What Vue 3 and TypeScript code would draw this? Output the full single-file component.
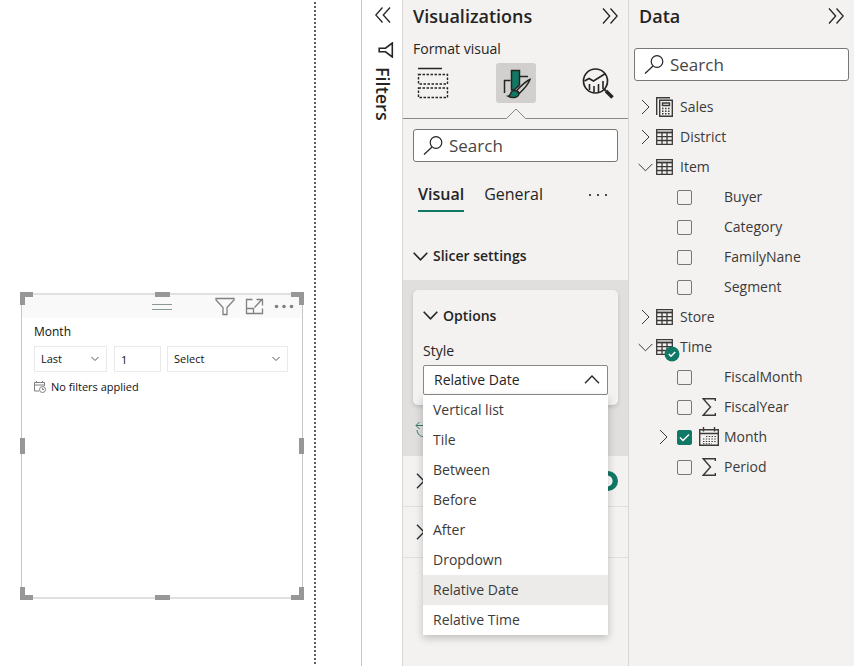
<script setup lang="ts">
import { ref } from 'vue'

interface Field {
  name: string
  sum?: boolean
  date?: boolean
  checked?: boolean
}
interface DataTable {
  name: string
  icon: 'calc' | 'grid'
  open: boolean
  inUse?: boolean
  fields: Field[]
}

const styles: string[] = [
  'Vertical list',
  'Tile',
  'Between',
  'Before',
  'After',
  'Dropdown',
  'Relative Date',
  'Relative Time',
]
const selectedStyle = ref('Relative Date')
const period = ref('Last')
const amount = ref('1')
const unit = ref('Select')
const headerOn = ref(true)

const tables = ref<DataTable[]>([
  { name: 'Sales', icon: 'calc', open: false, fields: [] },
  { name: 'District', icon: 'grid', open: false, fields: [] },
  {
    name: 'Item',
    icon: 'grid',
    open: true,
    fields: [{ name: 'Buyer' }, { name: 'Category' }, { name: 'FamilyNane' }, { name: 'Segment' }],
  },
  { name: 'Store', icon: 'grid', open: false, fields: [] },
  {
    name: 'Time',
    icon: 'grid',
    open: true,
    inUse: true,
    fields: [
      { name: 'FiscalMonth' },
      { name: 'FiscalYear', sum: true },
      { name: 'Month', date: true, checked: true },
      { name: 'Period', sum: true },
    ],
  },
])

const handles: string[] = ['nw', 'n', 'ne', 'e', 'se', 's', 'sw', 'w']
</script>

<template>
  <div class="app">
    <main class="canvas">
      <div class="report-page">
        <section class="visual" aria-label="Month slicer">
          <div class="frame">
            <header class="visual-bar">
              <span class="grip"></span>
              <div class="visual-actions">
                <button type="button" aria-label="Filters">
                  <svg width="20" height="19" viewBox="0 0 20 19">
                    <path d="M1 1.500H19V3L12 10.5V17.5H8V10.5L1 3Z" />
                  </svg>
                </button>
                <button type="button" aria-label="Focus mode">
                  <svg width="19" height="19" viewBox="0 0 19 19">
                    <path d="M7.500 2.500H1.500V16.500H17.500V11.500M1.500 11.500H8.500V16.500M9.500 10.500L17 2.500M11.500 2.500H17.500V8.500" />
                  </svg>
                </button>
                <button type="button" aria-label="More options">
                  <svg class="dots" width="20" height="19" viewBox="0 0 20 19">
                    <circle cx="2.500" cy="9.500" r="1.800" /><circle cx="10" cy="9.500" r="1.800" /><circle cx="17.500" cy="9.500" r="1.800" />
                  </svg>
                </button>
              </div>
            </header>
            <div class="slicer">
              <h3>Month</h3>
              <div class="slicer-row">
                <span class="small-select period">
                  <select v-model="period" aria-label="Period"><option>Last</option><option>This</option><option>Next</option></select>
                  <svg width="8" height="6" viewBox="0 0 8 6"><path d="M.500 1L4 4.500L7.500 1" /></svg>
                </span>
                <input v-model="amount" class="amount" aria-label="Amount" />
                <span class="small-select unit">
                  <select v-model="unit" aria-label="Unit"><option>Select</option><option>Days</option><option>Months</option></select>
                  <svg width="8" height="6" viewBox="0 0 8 6"><path d="M.500 1L4 4.500L7.500 1" /></svg>
                </span>
              </div>
              <p class="note">
                <svg width="12" height="12" viewBox="0 0 12 12">
                  <path d="M5 10H.500V1.500H10.500V5M.500 4H10.500M2.500 0V2M8.500 0V2" />
                  <circle cx="8.500" cy="8.500" r="3" /><path d="M8.500 6.800V8.500H10" />
                </svg>
                No filters applied
              </p>
            </div>
          </div>
          <span v-for="h in handles" :key="h" class="handle" :class="h"></span>
        </section>
      </div>
    </main>

    <aside class="filters">
      <button type="button" aria-label="Expand filters">
        <svg width="16" height="16" viewBox="0 0 16 16"><path d="M7.500 .500L.800 8L7.500 15.500M15 .500L8.300 8L15 15.500" /></svg>
      </button>
      <svg class="funnel" width="16" height="16" viewBox="0 0 16 16"><path d="M14.300 1V15L7.500 9.800H1.200V6.200H7.500Z" /></svg>
      <h2>Filters</h2>
    </aside>

    <aside class="pane viz">
      <header class="pane-head">
        <h2>Visualizations</h2>
        <button type="button" aria-label="Collapse Visualizations">
          <svg width="16" height="16" viewBox="0 0 16 16"><path d="M1 .500L7.700 8L1 15.500M8.500 .500L15.200 8L8.500 15.500" /></svg>
        </button>
      </header>
      <h3 class="sub">Format visual</h3>
      <nav class="modes">
        <button type="button" aria-label="Build visual">
          <svg width="32" height="32" viewBox="0 0 32 32">
            <path d="M1 1.500H25" stroke-width="1.500" />
            <path d="M1.500 7.500H30.500V17H1.500ZM1.500 21H30.500V30.500H1.500Z" stroke-dasharray="2.500 1.500" stroke-width="1.400" />
          </svg>
        </button>
        <button type="button" class="active" aria-label="Format visual">
          <svg width="32" height="32" viewBox="0 0 32 32">
            <path d="M4.500 26V13.500H10.500M19.500 9.500H28" stroke-width="1.500" />
            <path d="M11.500 23V3.500H19.500V18L14 23Z" fill="#117865" stroke-width="1.500" />
            <path d="M30 12.500C27 13.500 20 19.500 16.800 23.500L19.500 26.200C23.500 22.500 28.500 16.500 30 12.500Z" fill="#d2d0ce" stroke-width="1.500" />
            <path d="M16.500 23.800C13.500 22.700 11 24 10.500 27C10 28.500 9 29 8 29.200C12 31.500 18.500 31 19 26.500Z" fill="#117865" stroke-width="1.500" />
          </svg>
        </button>
        <button type="button" aria-label="Analytics">
          <svg width="32" height="32" viewBox="0 0 32 32">
            <circle cx="13.500" cy="14" r="12" stroke-width="1.700" />
            <path d="M2.500 14L7 11.500L11.500 14L23.500 6.500M7.500 23V17M12 25V19M16.500 25V17M21 22V14" stroke-width="1.600" />
            <path d="M22 22L24 24" stroke-width="2" /><path d="M24 24L30.500 30.500" stroke-width="3.500" />
          </svg>
        </button>
      </nav>
      <div class="notch"><i></i><svg width="22" height="11" viewBox="0 0 22 11"><path d="M0 10.500H1.500L11 1L20.500 10.500H22" /></svg><i></i></div>
      <label class="search">
        <svg width="20" height="19" viewBox="0 0 20 19"><circle cx="13" cy="6.500" r="5.800" /><path d="M9 11L1 18.500" /></svg>
        <input type="text" placeholder="Search" aria-label="Search format options" />
      </label>
      <nav class="tabs">
        <a href="#visual" class="current">Visual</a>
        <a href="#general">General</a>
        <button type="button" aria-label="More options"><svg class="dots" width="20" height="4" viewBox="0 0 20 4"><circle cx="2" cy="2" r="1.100" /><circle cx="10" cy="2" r="1.100" /><circle cx="18" cy="2" r="1.100" /></svg></button>
      </nav>
      <button type="button" class="group-head">
        <svg width="15" height="9" viewBox="0 0 15 9"><path d="M.700 .800L7.500 7.800L14.300 .800" /></svg>
        Slicer settings
      </button>
      <div class="group-body">
        <div class="card">
          <button type="button" class="group-head">
            <svg width="15" height="9" viewBox="0 0 15 9"><path d="M.700 .800L7.500 7.800L14.300 .800" /></svg>
            Options
          </button>
          <label for="style">Style</label>
          <div class="combo">
            <select id="style" v-model="selectedStyle">
              <option v-for="s in styles" :key="s">{{ s }}</option>
            </select>
            <svg width="16" height="9" viewBox="0 0 16 9"><path d="M1 8.200L8 1L15 8.200" /></svg>
            <ul class="list">
              <li v-for="s in styles" :key="s">
                <button type="button" :class="{ chosen: s === selectedStyle }" @click="selectedStyle = s">{{ s }}</button>
              </li>
            </ul>
          </div>
        </div>
        <button type="button" class="reset" aria-label="Reset to default">
          <svg width="18" height="17" viewBox="0 0 18 17"><path d="M4.500 1L1 4.500L4.500 8M1 4.500H12M2 9C3 18 15 18 16 9" /></svg>
        </button>
      </div>
      <div class="closed">
        <button type="button" aria-label="Expand slicer header"><svg width="9" height="16" viewBox="0 0 9 16"><path d="M1 .800L8 8L1 15.200" /></svg></button>
        <input v-model="headerOn" type="checkbox" class="switch" aria-label="Slicer header" />
      </div>
      <div class="closed">
        <button type="button" aria-label="Expand values"><svg width="9" height="16" viewBox="0 0 9 16"><path d="M1 .800L8 8L1 15.200" /></svg></button>
      </div>
    </aside>

    <aside class="pane data">
      <header class="pane-head">
        <h2>Data</h2>
        <button type="button" aria-label="Collapse Data">
          <svg width="16" height="16" viewBox="0 0 16 16"><path d="M1 .500L7.700 8L1 15.500M8.500 .500L15.200 8L8.500 15.500" /></svg>
        </button>
      </header>
      <label class="search">
        <svg width="20" height="19" viewBox="0 0 20 19"><circle cx="13" cy="6.500" r="5.800" /><path d="M9 11L1 18.500" /></svg>
        <input type="text" placeholder="Search" aria-label="Search data" />
      </label>
      <ul class="tree">
        <li v-for="t in tables" :key="t.name">
          <button type="button" class="table-row" :aria-expanded="t.open" @click="t.open = !t.open">
            <span class="twist">
              <svg v-if="t.open" width="15" height="9" viewBox="0 0 15 9"><path d="M.700 1L7.500 7.800L14.300 1" /></svg>
              <svg v-else width="9" height="16" viewBox="0 0 9 16"><path d="M1 1L8 8L1 15" /></svg>
            </span>
            <span class="table-icon">
              <svg v-if="t.icon === 'calc'" width="17" height="20" viewBox="0 0 17 20">
                <path d="M.700 18V.700H14" stroke-width="1.400" />
                <path d="M3.700 3.200H16.300V19.300H3.700Z" stroke-width="1.400" />
                <path d="M6.500 6H13.500V8.500H6.500Z" stroke-width="1.400" />
                <path d="M6 11.500H14.500M6 14.200H14.500M6 16.800H14.500" stroke-dasharray="1.500 1.500" stroke-width="1.400" />
              </svg>
              <svg v-else width="17" height="16" viewBox="0 0 17 16">
                <path d="M.700 .700H16.300V15.300H.700ZM6 4V15M11 4V15M1 7.700H16M1 11.500H16" stroke-width="1.300" /><path d="M0 3.500H17" stroke-width="1.800" />
              </svg>
              <svg v-if="t.inUse" class="badge" width="16" height="16" viewBox="0 0 16 16">
                <circle cx="8" cy="8" r="7.500" fill="#117865" stroke="none" /><path d="M4.800 8L7 10.200L11.200 6" stroke="#fff" stroke-width="1.600" />
              </svg>
            </span>
            {{ t.name }}
          </button>
          <ul v-if="t.open">
            <li v-for="f in t.fields" :key="f.name">
              <label class="field">
                <span class="twist">
                  <svg v-if="f.date" width="9" height="16" viewBox="0 0 9 16"><path d="M1 1L8 8L1 15" /></svg>
                </span>
                <input v-model="f.checked" type="checkbox" />
                <span class="kind">
                  <svg v-if="f.sum" width="14" height="18" viewBox="0 0 14 18"><path d="M13.300 3V.800H1.200L8.500 9L1.200 17.200H13.300V15" stroke-width="1.400" /></svg>
                  <svg v-if="f.date" width="20" height="20" viewBox="0 0 20 20">
                    <path d="M.700 2.700H19.300V18.300H.700ZM1 6.500H19M4.500 0V4.500M15.500 0V4.500" stroke-width="1.400" />
                    <path d="M7 9.500H17M4 12H17M4 14.500H17M4 16.800H13" stroke-dasharray="1.400 1.400" stroke-width="1.100" />
                  </svg>
                </span>
                {{ f.name }}
              </label>
            </li>
          </ul>
        </li>
      </ul>
    </aside>
  </div>
</template>

<style>
body {
  margin: 0;
  background: #fff;
}
</style>

<style scoped>
.app {
  display: grid;
  grid-template-columns: minmax(0, 1fr) 41px 226px 226px;
  min-height: 100vh;
  font: 14px/20px 'Open Sans', 'Noto Sans', sans-serif;
  color: #252423;
}
* {
  box-sizing: border-box;
}
h2,
h3,
p,
ul {
  margin: 0;
  padding: 0;
  list-style: none;
}
button,
input,
select {
  font: inherit;
  color: inherit;
  margin: 0;
  padding: 0;
  border: 0;
  background: none;
}
button {
  display: flex;
  align-items: center;
}
select {
  appearance: none;
}
a {
  color: inherit;
  text-decoration: none;
}
svg {
  flex: none;
  fill: none;
  stroke: #252423;
  stroke-width: 1.3;
}
.dots {
  fill: #252423;
  stroke: none;
}

/* report canvas */
.canvas {
  display: flex;
  padding-right: 45px;
}
.report-page {
  position: relative;
  flex: 1;
  background: repeating-linear-gradient(#fff 0 2px, #605e5c 2px 4px) right / 2px 100% no-repeat;
}
.visual {
  position: absolute;
  left: 20px;
  top: 292px;
  width: 284px;
  height: 308px;
  padding: 1px;
}
.frame {
  height: 100%;
  border: 1px solid #c6c6c6;
  border-width: 2px 1px;
  border-top-color: #e0e0e0;
  border-bottom-color: #e0e0e0;
}
.visual-bar {
  display: grid;
  grid-template-columns: 1fr 20px 1fr;
  align-items: center;
  height: 23px;
  background: #f9f9f9;
}
.visual svg {
  stroke: #808080;
}
.visual .dots {
  fill: #808080;
  stroke: none;
}
.grip {
  grid-column: 2;
  height: 6px;
  border: 1px solid #8a9a90;
  border-width: 1px 0;
}
.visual-actions {
  display: flex;
  justify-content: flex-end;
  gap: 10px;
  padding-right: 8px;
}
.slicer {
  padding: 4px 12px;
  font-size: 11px;
  line-height: 16px;
  color: #111;
}
.slicer h3 {
  font-size: 12px;
  font-weight: 400;
  line-height: 20px;
}
.slicer-row {
  display: flex;
  margin-top: 4px;
}
.small-select {
  position: relative;
  display: flex;
  align-items: center;
  height: 26px;
  border: 1px solid #eaeaea;
}
.small-select select {
  width: 100%;
  height: 100%;
  padding: 0 6px;
}
.small-select svg {
  position: absolute;
  right: 7px;
  stroke: #555;
  stroke-width: 1;
  pointer-events: none;
}
.period {
  width: 73px;
}
.amount {
  width: 47px;
  height: 26px;
  margin: 0 6px 0 7px;
  padding: 0 6px;
  border: 1px solid #eaeaea;
}
.unit {
  width: 121px;
}
.note {
  display: flex;
  align-items: center;
  gap: 5px;
  margin-top: 7px;
}
.note svg {
  stroke-width: 1;
}
.handle {
  position: absolute;
  border: 0 solid #979797;
}
.nw,
.ne,
.sw,
.se {
  width: 13px;
  height: 13px;
}
.nw,
.ne {
  top: 0;
  border-top-width: 5px;
}
.sw,
.se {
  bottom: 0;
  border-bottom-width: 5px;
}
.nw,
.sw {
  left: 0;
  border-left-width: 5px;
}
.ne,
.se {
  right: 0;
  border-right-width: 5px;
}
.n,
.s {
  left: 50%;
  width: 15px;
  margin-left: -7px;
  border-top-width: 5px;
}
.n {
  top: 0;
}
.s {
  bottom: 0;
}
.e,
.w {
  top: 50%;
  height: 16px;
  margin-top: -8px;
  border-left-width: 5px;
}
.e {
  right: 0;
}
.w {
  left: 0;
}

/* collapsed filters pane */
.filters {
  display: flex;
  flex-direction: column;
  align-items: center;
  padding-top: 7px;
  padding-left: 1px;
  border-left: 1px solid #c8c6c4;
}
.filters .funnel {
  margin: 19px 0 9px 6px;
  stroke-width: 1.6;
}
.filters h2 {
  writing-mode: vertical-rl;
  font-size: 18px;
  font-weight: 600;
  line-height: 20px;
}

/* side panes */
.pane {
  border-left: 1px solid #d8d6d4;
  background: #f3f2f1;
}
.pane-head {
  display: flex;
  justify-content: space-between;
  align-items: center;
  height: 32px;
  padding: 0 10px;
}
.pane-head h2 {
  font-size: 18px;
  font-weight: 600;
}
.sub {
  padding: 7px 10px 4px;
  font-size: 14px;
  font-weight: 400;
}
.modes {
  display: flex;
  justify-content: space-between;
  padding: 0 10px;
}
.modes button {
  justify-content: center;
  width: 40px;
  height: 40px;
  border-radius: 3px;
}
.modes .active {
  background: #d2d0ce;
}
.notch {
  display: flex;
  align-items: flex-end;
  padding-top: 5px;
}
.notch i {
  flex: 1;
  border-bottom: 1px solid #8a8886;
}
.notch svg {
  stroke: #8a8886;
  stroke-width: 1;
}
.search {
  display: flex;
  align-items: center;
  gap: 6px;
  height: 33px;
  padding: 0 9px;
  border: 1px solid #797775;
  border-radius: 3px;
  background: #fff;
}
.search svg {
  stroke-width: 1.2;
}
.search input {
  flex: 1;
  min-width: 0;
  font-size: 17px;
  outline: none;
}
.search input::placeholder {
  color: #484644;
  opacity: 1;
}
.viz .search {
  margin: 10px 10px 0;
}
.tabs {
  display: flex;
  align-items: center;
  gap: 20px;
  height: 50px;
  margin-top: 8px;
  padding: 0 20px 0 15px;
  font-size: 16px;
  line-height: 32px;
}
.tabs .current {
  font-weight: 600;
  border-bottom: 2px solid #117865;
}
.tabs a {
  border-bottom: 2px solid transparent;
}
.tabs button {
  height: 34px;
  margin-left: auto;
}
.group-head {
  gap: 5px;
  width: 100%;
  height: 48px;
  padding: 0 10px;
  font-weight: 600;
}
.viz > .group-head {
  margin-top: 12px;
}
.group-head svg {
  stroke-width: 1.6;
}
.group-body {
  padding: 10px 10px 18px;
  background: #e0dfdd;
}
.card {
  height: 115px;
  padding: 0 10px;
  border-radius: 5px;
  background: #f3f2f1;
  box-shadow: 0 2px 4px rgb(0 0 0 / 14%);
}
.card .group-head {
  height: 51px;
  padding: 0;
}
.card label {
  display: block;
  padding-bottom: 4px;
}
.combo {
  position: relative;
}
.combo select {
  display: block;
  width: 100%;
  height: 30px;
  padding: 0 10px;
  border: 1px solid #8a8886;
  border-radius: 2px;
  background: #fff;
}
.combo > svg {
  position: absolute;
  right: 8px;
  top: 10px;
  pointer-events: none;
}
.list {
  position: absolute;
  z-index: 2;
  left: 0;
  right: 0;
  top: 100%;
  background: #fff;
  box-shadow: 0 3px 8px rgb(0 0 0 / 22%);
}
.list button {
  width: 100%;
  height: 30px;
  padding: 0 10px;
  color: #3b3a39;
}
.list .chosen {
  background: #edebe9;
}
.reset {
  height: 17px;
  margin: 16px 0 0 2px;
}
.reset svg {
  stroke: #31786b;
  stroke-width: 1;
}
.closed {
  display: flex;
  justify-content: space-between;
  align-items: center;
  height: 51px;
  padding: 0 10px 0 13px;
  border-bottom: 1px solid #e1dfdd;
}
.switch {
  appearance: none;
  width: 40px;
  height: 20px;
  border-radius: 10px;
  background: radial-gradient(circle at 29px 10px, #fff 5px, #117865 6px);
}

/* data pane */
.data .search {
  margin: 16px 5px 11px;
}
.table-row,
.field {
  display: flex;
  align-items: center;
  height: 30px;
  color: #3b3a39;
}
.table-row {
  width: 100%;
  padding-left: 5px;
}
.tree svg {
  stroke: #3b3a39;
  stroke-width: 1;
}
.table-row .twist {
  display: flex;
  justify-content: center;
  width: 22px;
}
.table-icon {
  position: relative;
  display: flex;
  margin-right: 7px;
}
.tree .badge {
  position: absolute;
  left: 8px;
  top: 7px;
  stroke: none;
}
.field {
  padding-left: 24px;
}
.field .twist {
  display: flex;
  width: 24px;
  padding-left: 6px;
}
.field input {
  appearance: none;
  width: 15px;
  height: 15px;
  border: 1px solid #797775;
  border-radius: 2px;
}
.field input:checked {
  border-color: #117865;
  background: #117865 url("data:image/svg+xml,%3Csvg xmlns='http://www.w3.org/2000/svg' viewBox='0 0 13 13'%3E%3Cpath d='M2 6.500L5 9.500L11 3.500' fill='none' stroke='%23fff' stroke-width='1.500'/%3E%3C/svg%3E") center / 13px no-repeat;
}
.kind {
  display: flex;
  justify-content: center;
  width: 20px;
  margin: 0 5px 0 7px;
}
</style>
